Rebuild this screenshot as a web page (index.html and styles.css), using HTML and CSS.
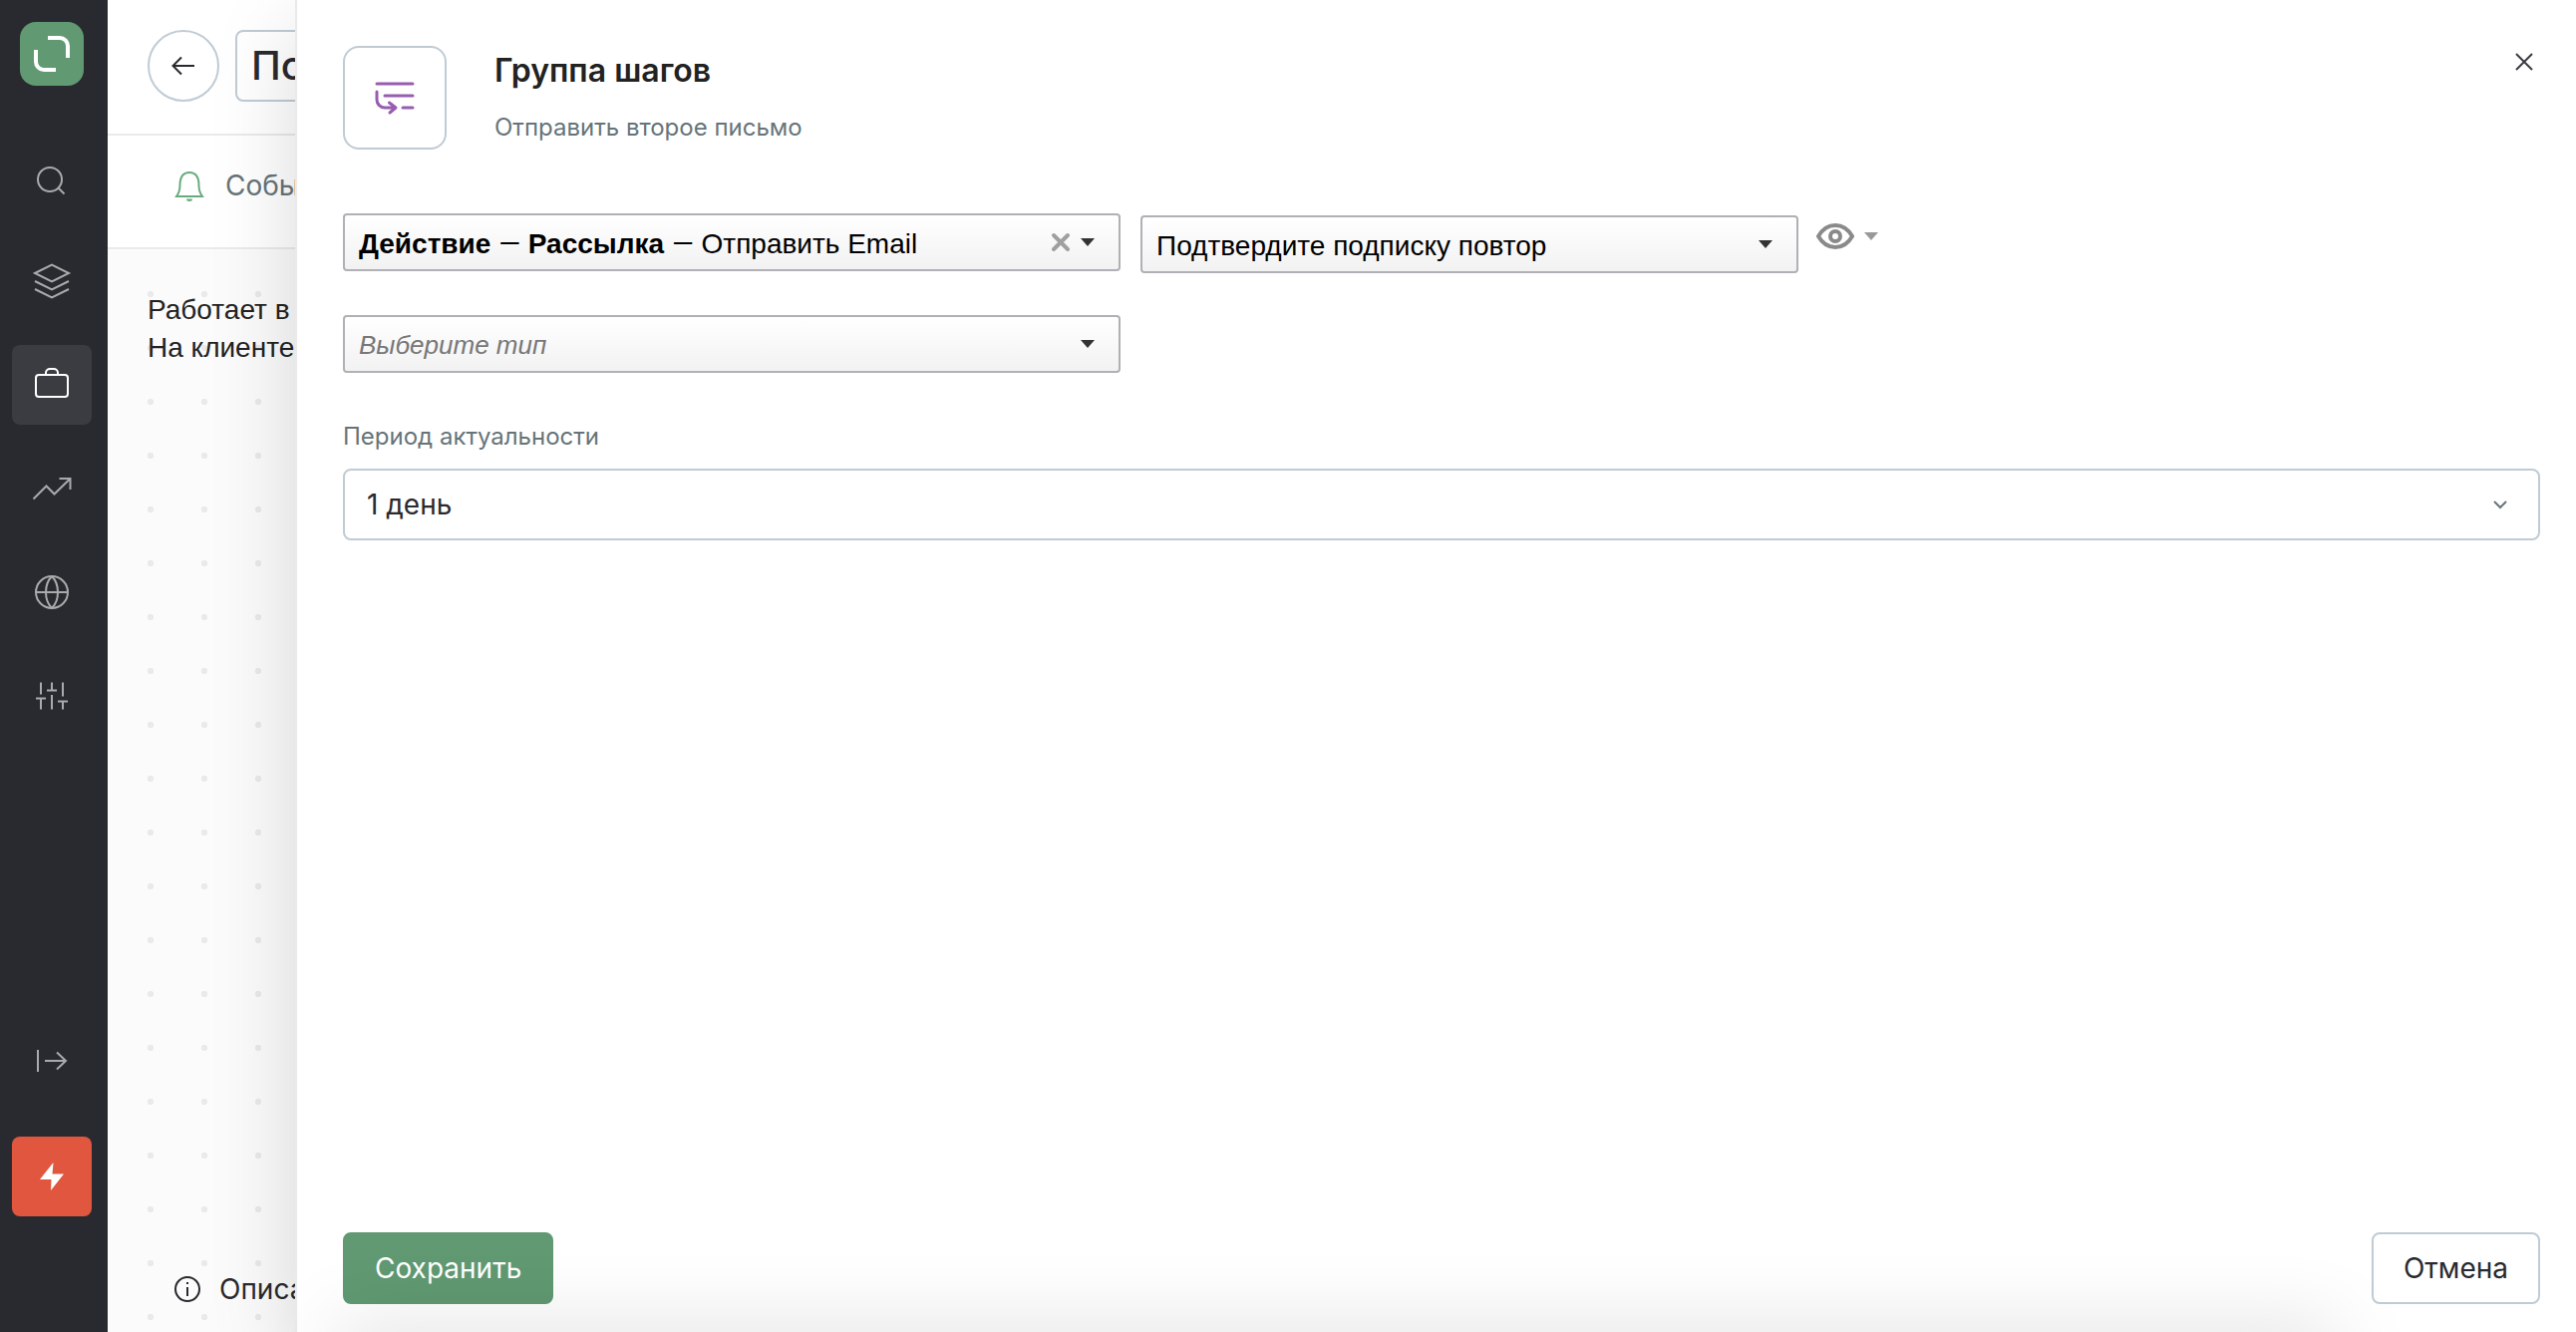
FILE: index.html
```html
<!DOCTYPE html>
<html lang="ru">
<head>
<meta charset="utf-8">
<meta name="viewport" content="width=device-width, initial-scale=1">
<title>Группа шагов</title>
<link rel="stylesheet" href="styles.css">
</head>
<body>
<div class="app">
  <nav class="sidebar" aria-label="Главное меню">
    <a class="logo" href="#" aria-label="Главная">
      <svg width="64" height="64" viewBox="0 0 64 64"><path d="M28 16h12a8 8 0 0 1 8 8v12M36 48H24a8 8 0 0 1-8-8V28"/></svg>
    </a>
    <div class="menu">
      <a class="item" href="#" aria-label="Поиск">
        <svg width="40" height="40" viewBox="0 0 40 40"><circle cx="18" cy="22" r="12"/><path d="M26.500 30.500l6 6"/></svg>
      </a>
      <a class="item" href="#" aria-label="Данные">
        <svg width="40" height="40" viewBox="0 0 40 40"><path d="M3 12l17-8.500L37 12l-17 8.500zM3 20l17 8.500L37 20M3 28l17 8.500L37 28"/></svg>
      </a>
      <a class="item active" href="#" aria-label="Кампании" aria-current="page">
        <svg width="40" height="40" viewBox="0 0 40 40"><rect x="4" y="10" width="32" height="22" rx="3"/><path d="M14 10V8a4 4 0 0 1 4-4h4a4 4 0 0 1 4 4v2"/></svg>
      </a>
      <a class="item" href="#" aria-label="Отчёты">
        <svg width="40" height="40" viewBox="0 0 40 40"><path d="M1.500 30.500L14.500 17.500l8 8L38.500 10M27.500 10h11v11"/></svg>
      </a>
      <a class="item" href="#" aria-label="Интеграции">
        <svg width="40" height="40" viewBox="0 0 40 40"><circle cx="20" cy="20" r="16"/><path d="M4 20h32M20 4c-8 8-8 24 0 32M20 4c8 8 8 24 0 32"/></svg>
      </a>
      <a class="item" href="#" aria-label="Настройки">
        <svg width="40" height="40" viewBox="0 0 40 40"><path d="M9 6.500v12M4 22.500h10M9 22.500v11M20 6.500v8M15 14.500h10M20 19v14.500M31 6.500v14M26 25.500h10M31 25.500v8"/></svg>
      </a>
    </div>
    <div class="tools">
      <button class="item" type="button" aria-label="Развернуть меню">
        <svg width="40" height="40" viewBox="0 0 40 40"><path d="M6 9v22M13 20h21M25 11.500l9 8.500-9 8.500"/></svg>
      </button>
      <button class="item alert" type="button" aria-label="Быстрые действия">
        <svg width="40" height="40" viewBox="0 0 40 40"><path d="M21.500 6L8 23h11.500L19 34 32 17.500H20.500z"/></svg>
      </button>
    </div>
  </nav>

  <main class="workspace">
    <header class="topbar">
      <button class="back" type="button" aria-label="Назад">
        <svg width="32" height="32" viewBox="0 0 32 32"><path d="M27 16H6M14 7.500L5.500 16l8.500 8.500"/></svg>
      </button>
      <input class="name" type="text" value="Подтверждение" aria-label="Название">
    </header>
    <div class="tabs">
      <a class="tab" href="#">
        <svg width="32" height="32" viewBox="0 0 32 32"><path d="M3 27c3-4 3.500-7 3.500-11 0-7 1.500-13 9.500-13s9.500 6 9.500 13c0 4 .5 7 3.500 11z"/><path class="clapper" d="M13 29.500h6a3 2.500 0 0 1-6 0z"/></svg>
        Событие
      </a>
    </div>
    <div class="canvas">
      <p class="summary">Работает в<br>На клиенте</p>
      <a class="about" href="#">
        <svg width="28" height="28" viewBox="0 0 28 28"><circle cx="14" cy="14" r="12"/><path d="M14 12v9M14 7v2"/></svg>
        Описание
      </a>
    </div>
  </main>

  <section class="panel" role="dialog" aria-labelledby="panel-title">
    <header class="panel-head">
      <div class="badge">
        <svg width="48" height="48" viewBox="0 0 48 48"><path d="M6 10h36M14 22h28M32 34h10M6 18v8a8 8 0 0 0 8 8h10M18.500 29l6.500 5-6 5"/></svg>
      </div>
      <div class="heading">
        <h1 id="panel-title">Группа шагов</h1>
        <p>Отправить второе письмо</p>
      </div>
      <button class="close" type="button" aria-label="Закрыть">
        <svg width="24" height="24" viewBox="0 0 24 24"><path d="M4 4l16 16M20 4L4 20"/></svg>
      </button>
    </header>

    <form class="steps">
      <div class="step">
        <div class="picker action">
          <button class="picker-value" type="button" aria-haspopup="listbox"><b>Действие</b> <span class="dash">—</span> <b>Рассылка</b> <span class="dash">—</span> Отправить Email</button>
          <button class="clear" type="button" aria-label="Очистить">
            <svg width="20" height="20" viewBox="0 0 20 20"><path d="M3 3l14 14M17 3L3 17"/></svg>
          </button>
          <svg class="caret" width="14" height="8" viewBox="0 0 14 8"><path d="M0 0h14L7 8z"/></svg>
        </div>
        <div class="template">
          <div class="picker">
            <select class="picker-value" aria-label="Шаблон письма"><option>Подтвердите подписку повтор</option></select>
            <svg class="caret" width="14" height="8" viewBox="0 0 14 8"><path d="M0 0h14L7 8z"/></svg>
          </div>
        </div>
        <button class="preview" type="button" aria-label="Просмотр">
          <svg class="eye" width="38" height="26" viewBox="0 0 38 26"><path d="M2 13C6 6 12 2 19 2s13 4 17 11c-4 7-10 11-17 11S6 20 2 13z"/><circle cx="19" cy="13" r="5"/></svg>
          <svg class="caret" width="14" height="8" viewBox="0 0 14 8"><path d="M0 0h14L7 8z"/></svg>
        </button>
      </div>
      <div class="step">
        <div class="picker action empty">
          <select class="picker-value" aria-label="Тип шага"><option>Выберите тип</option></select>
          <svg class="caret" width="14" height="8" viewBox="0 0 14 8"><path d="M0 0h14L7 8z"/></svg>
        </div>
      </div>
      <div class="period">
        <label for="period">Период актуальности</label>
        <div class="period-box">
          <select id="period"><option>1 день</option></select>
          <svg width="16" height="10" viewBox="0 0 16 10"><path d="M2 2l6 6 6-6"/></svg>
        </div>
      </div>
    </form>

    <footer class="panel-foot">
      <button class="btn primary" type="button">Сохранить</button>
      <button class="btn" type="button">Отмена</button>
    </footer>
    <div class="foot-shade"></div>
  </section>
</div>
</body>
</html>
```
FILE: styles.css
```css
* { box-sizing: border-box; }
body { margin: 0; font-family: Inter, sans-serif; font-size: 28px; color: #222; }
h1, p { margin: 0; }
button, input, select { margin: 0; padding: 0; border: 0; background: none; font: inherit; color: inherit; }
select { appearance: none; }
a { color: inherit; text-decoration: none; }
svg { display: block; flex: none; fill: none; stroke: currentColor; stroke-width: 2; }

.app { position: relative; display: flex; height: 100vh; overflow: hidden; background: #fff; }

.sidebar { flex: none; width: 108px; padding: 22px 16px 116px 12px; display: flex; flex-direction: column; background: #292a2f; color: #a9aaab; }
.logo { margin: 0 8px 52px; border-radius: 16px; background: #609972; color: #fff; }
.logo svg { stroke-width: 4; }
.menu { display: flex; flex-direction: column; gap: 24px; }
.tools { margin-top: auto; display: flex; flex-direction: column; gap: 36px; }
.item { width: 80px; height: 80px; display: flex; align-items: center; justify-content: center; border-radius: 8px; }
.item.active { background: #3a3c41; color: #fff; }
.item.alert { background: #e1563f; color: #fff; }
.item.alert svg { fill: currentColor; stroke: none; }

.workspace { flex: 1; min-width: 0; display: flex; flex-direction: column; }
.topbar { display: flex; gap: 16px; padding: 30px 40px 32px; border-bottom: 2px solid #eaeaea; }
.back { flex: none; width: 72px; height: 72px; display: flex; align-items: center; justify-content: center; border: 2px solid #c0cbd4; border-radius: 50%; color: #292a2f; }
.name { height: 72px; width: 800px; padding: 0 14px 2px; border: 2px solid #c0cbd4; border-radius: 8px; font-size: 40px; font-weight: 500; color: #292a2f; }
.tabs { height: 114px; padding: 0 66px 12px; display: flex; align-items: center; border-bottom: 2px solid #eaeaea; }
.tab { display: flex; align-items: center; gap: 20px; color: #667479; }
.tab svg { color: #68ac7d; }
.tab .clapper { fill: currentColor; stroke: none; }
.canvas { flex: 1; padding: 42px 40px 26px; display: flex; flex-direction: column; justify-content: space-between; background: #fbfbfb radial-gradient(circle, #eaeaea 3px, transparent 3px) 16px 18px / 54px 54px; }
.summary { font-family: "Liberation Sans", Arial, sans-serif; line-height: 38px; }
.about { display: flex; align-items: center; gap: 18px; padding-left: 26px; color: #292a2f; }

.panel { position: absolute; inset: 0 0 0 296px; padding: 46px 36px 28px 46px; display: flex; flex-direction: column; border-left: 2px solid #eaeaea; background: #fff; box-shadow: 0 30px 80px rgba(0, 0, 0, .15); }
.panel-head { display: flex; align-items: flex-start; }
.badge { flex: none; width: 104px; height: 104px; display: flex; align-items: center; justify-content: center; border: 2px solid #c0cbd4; border-radius: 16px; color: #985db0; }
.badge svg { stroke-width: 3; stroke-linecap: round; stroke-linejoin: round; }
.heading { flex: 1; padding: 5px 0 0 48px; }
.heading h1 { font-size: 32px; line-height: 40px; font-weight: 600; }
.heading p { margin-top: 21px; font-size: 24px; line-height: 32px; color: #667479; }
.close { padding: 4px; color: #3a3c41; }

.steps { padding-top: 64px; display: flex; flex-direction: column; }
.step { display: flex; align-items: flex-start; gap: 20px; margin-bottom: 42px; font-family: "Liberation Sans", Arial, sans-serif; color: #000; }
.picker { position: relative; width: 660px; height: 58px; display: flex; align-items: center; border: 2px solid #b0b0b6; border-radius: 4px; background: linear-gradient(#fff, #f2f2f2); }
.picker.action { width: 780px; }
.picker-value { flex: 1; align-self: stretch; min-width: 0; padding: 2px 80px 0 14px; text-align: left; }
.dash { font-family: Roboto, sans-serif; }
.picker .caret { position: absolute; right: 24px; fill: #333; stroke: none; pointer-events: none; }
.clear { position: absolute; right: 48px; color: #a0a0a0; }
.clear svg { stroke-width: 4; stroke-linecap: round; }
.empty .picker-value { font-size: 26px; font-style: italic; color: #777; }
.template { padding-top: 2px; }
.preview { display: flex; align-items: center; gap: 10px; margin-left: -2px; padding-top: 10px; color: #8a8a8a; }
.preview .eye { stroke-width: 4; }
.preview .caret { fill: #999; stroke: none; }

.period { padding-top: 6px; }
.period label { display: block; margin-bottom: 16px; font-size: 24px; line-height: 32px; color: #667479; }
.period-box { position: relative; display: flex; align-items: center; }
.period-box select { flex: 1; height: 72px; padding: 0 22px; border: 2px solid #c0cbd4; border-radius: 8px; color: #292a2f; }
.period-box svg { position: absolute; right: 32px; color: #667479; pointer-events: none; }

.panel-foot { margin-top: auto; display: flex; justify-content: space-between; }
.btn { height: 72px; padding: 0 30px; border: 2px solid #c0cbd4; border-radius: 8px; background: #fff; color: #292a2f; }
.btn.primary { border-color: #609972; background: #609972; color: #fff; }
/* soft shade that rises over the footer from the lower edge */
.foot-shade { position: absolute; left: 40px; right: 240px; bottom: -40px; height: 40px; box-shadow: 0 0 80px rgba(0, 0, 0, .17); pointer-events: none; }
```
